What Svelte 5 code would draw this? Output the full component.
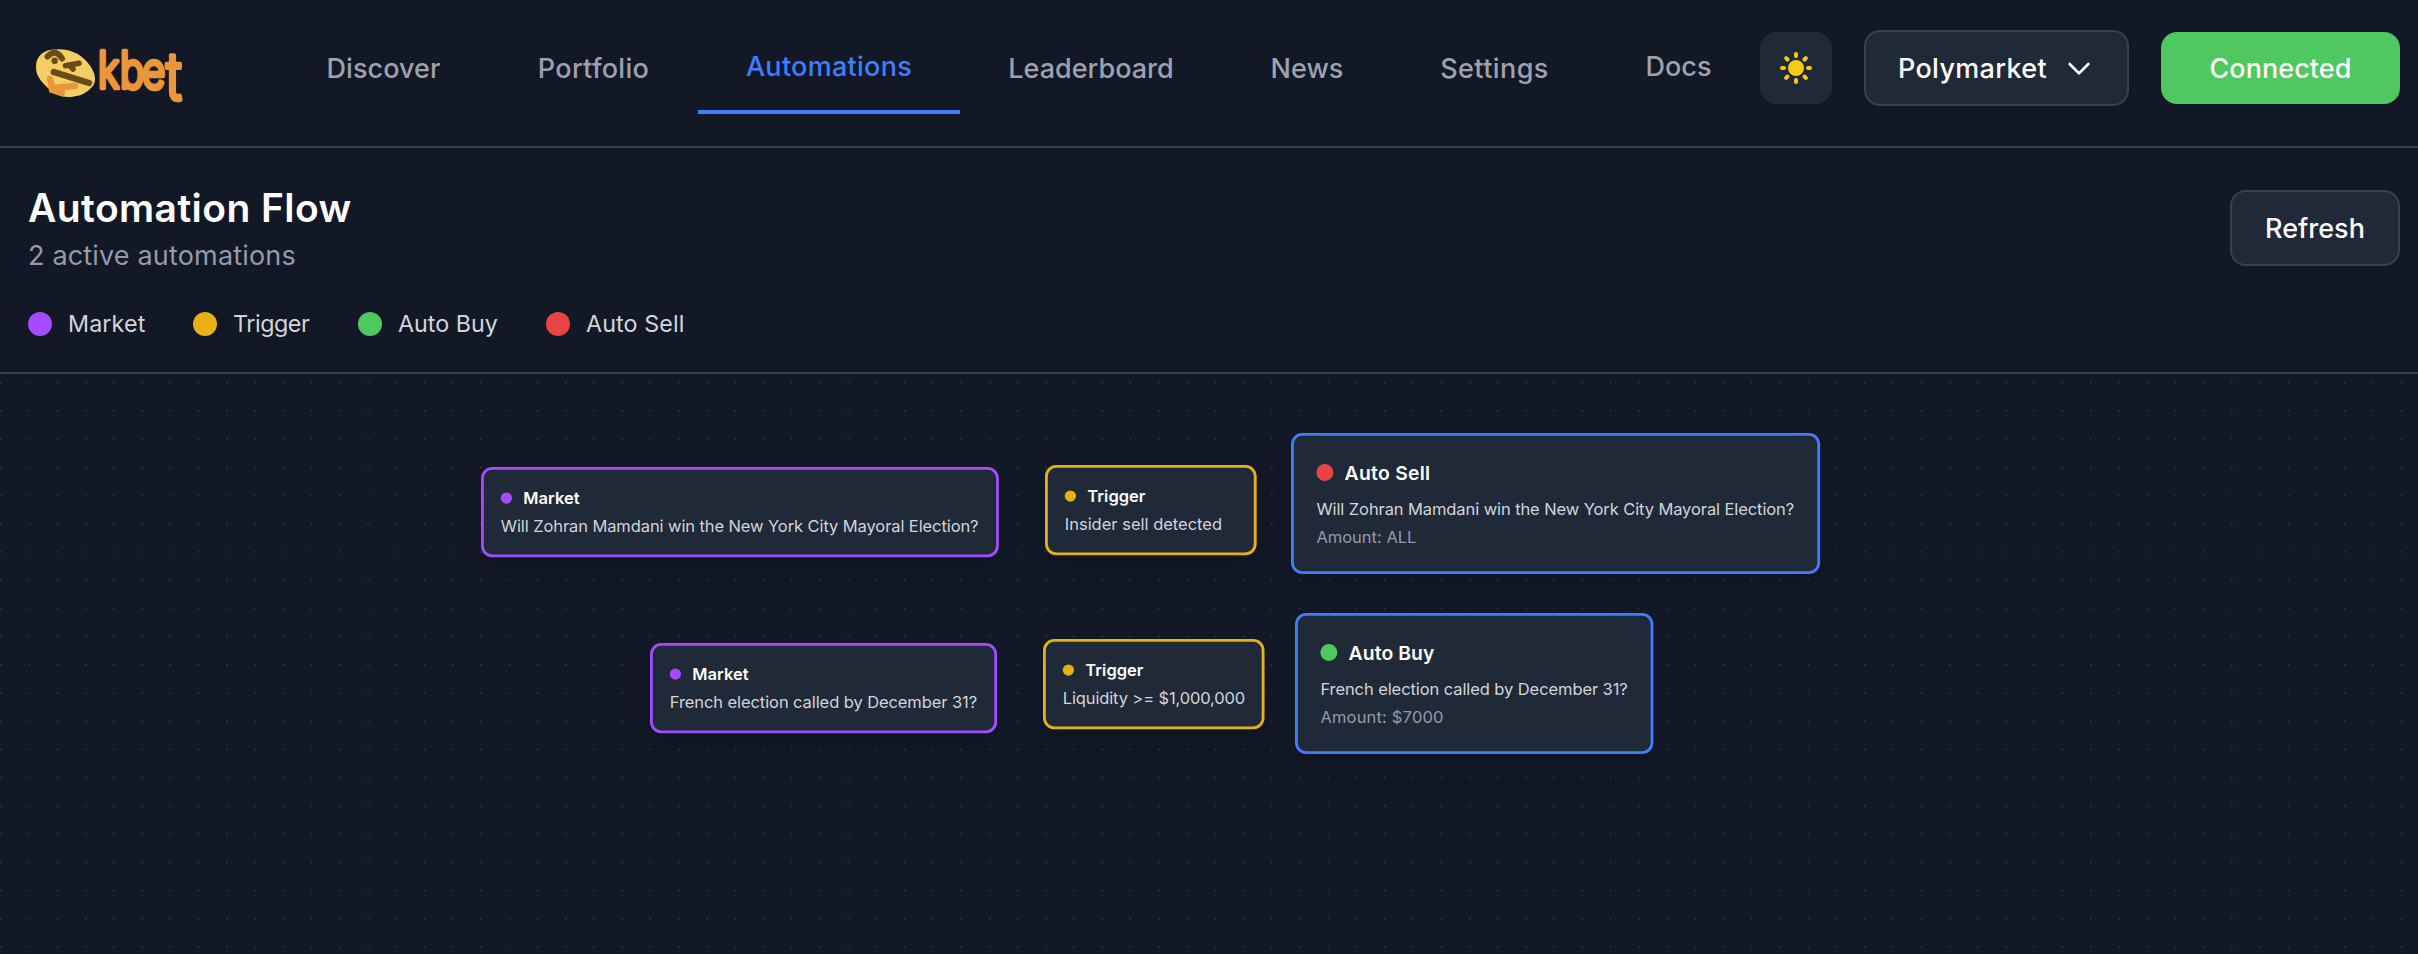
<script>
  const nav = [
    { label: 'Discover', width: 211, spacing: 0.05 },
    { label: 'Portfolio', width: 209, spacing: 0.3 },
    { label: 'Automations', width: 262, spacing: 0.28, active: true },
    { label: 'Leaderboard', width: 262, spacing: 0 },
    { label: 'News', width: 170, spacing: 0 },
    { label: 'Settings', width: 205, spacing: 0.4 },
    { label: 'Docs', width: 163, spacing: 0, raised: true },
  ];

  const legend = [
    { label: 'Market', color: '#a24bff', width: 77, spacing: 0.12 },
    { label: 'Trigger', color: '#e7b114', width: 77, spacing: -0.45 },
    { label: 'Auto Buy', color: '#50c860', width: 100, spacing: 0 },
    { label: 'Auto Sell', color: '#e84444', width: 100, spacing: 0.1 },
  ];

  const zoom = 1.411;
  const mayor = 'Will Zohran Mamdani win the New York City Mayoral Election?';
  const french = 'French election called by December 31?';

  // Node positions are canvas pixels, measured from the canvas' top left corner.
  const nodes = [
    { kind: 'market', title: 'Market', text: mayor, x: 481.4, y: 93.2, w: 517.6, spacing: -0.065 },
    { kind: 'trigger', title: 'Trigger', text: 'Insider sell detected', x: 1045, y: 90.6, w: 212, spacing: 0 },
    { kind: 'action', title: 'Auto Sell', dot: 'sell', text: mayor, amount: 'Amount: ALL', x: 1291, y: 59, w: 528.8, spacing: -0.065, titleSpacing: 0.2 },
    { kind: 'market', title: 'Market', text: french, x: 649.5, y: 268.5, w: 347.4, spacing: -0.058 },
    { kind: 'trigger', title: 'Trigger', text: 'Liquidity >= $1,000,000', x: 1043, y: 265.3, w: 221.8, spacing: -0.09 },
    { kind: 'action', title: 'Auto Buy', dot: 'buy', text: french, amount: 'Amount: $7000', x: 1294.7, y: 239.2, w: 358.6, spacing: -0.058, titleSpacing: 0.07, amountSpacing: 0.13 },
  ];
</script>

<div class="page">
  <header class="topbar">
    <svg class="logo" viewBox="0 0 160 76" width="160" height="76" aria-label="kbet">
      <path d="M2 33C2 27 4 23 8 19.500C12 16 18 15 23 15.500C29 15 34 16 39 18C45 20 50 24 54 29C58 34 61 39 61 45C61 51 58 53 55 56C49 61 42 63 34 63C26 63 21 60 16 56C12 52 7 48 4 42C2.500 39 2 36 2 33Z" fill="#f4cd65" />
      <path d="M16 45L18 54L41 52M18 56L28 59" fill="none" stroke="#eb9638" stroke-width="6.500" stroke-linecap="round" stroke-linejoin="round" />
      <path d="M13.500 22.500Q21.500 14 28 24.500" fill="none" stroke="#6a4a16" stroke-width="6" stroke-linecap="round" />
      <circle cx="20.7" cy="26.700" r="3.200" fill="#6a4a16" />
      <path d="M31.500 31.700L45 29.300M37.500 33.500L39 35" fill="none" stroke="#6a4a16" stroke-width="5.600" stroke-linecap="round" />
      <path d="M19.800 38L55 49" fill="none" stroke="#6a4a16" stroke-width="6.400" stroke-linecap="round" />
      <text class="wordmark" transform="scale(.8 1)" y="54.500"><tspan x="80">k</tspan><tspan x="107.500">b</tspan><tspan x="135">e</tspan><tspan class="tall" x="165" dy="12">t</tspan></text>
    </svg>

    <nav>
      {#each nav as item}
        <a class:active={item.active} class:raised={item.raised} style="width: {item.width}px; letter-spacing: {item.spacing}px">{item.label}</a>
      {/each}
    </nav>

    <div class="actions">
      <button class="theme" aria-label="Toggle theme">
        <svg width="40" height="40" viewBox="0 0 20 20" fill="#f8cb13">
          <path fill-rule="evenodd" clip-rule="evenodd" d="M10 2a1 1 0 011 1v1a1 1 0 11-2 0V3a1 1 0 011-1zm4 8a4 4 0 11-8 0 4 4 0 018 0zm-.464 4.950l.707.707a1 1 0 001.414-1.414l-.707-.707a1 1 0 00-1.414 1.414zm2.120-10.607a1 1 0 010 1.414l-.706.707a1 1 0 11-1.414-1.414l.707-.707a1 1 0 011.414 0zM17 11a1 1 0 100-2h-1a1 1 0 100 2h1zm-7 4a1 1 0 011 1v1a1 1 0 11-2 0v-1a1 1 0 011-1zM5.050 6.464A1 1 0 106.465 5.050l-.708-.707a1 1 0 00-1.414 1.414l.707.707zm1.414 8.486l-.707.707a1 1 0 01-1.414-1.414l.707-.707a1 1 0 011.414 1.414zM4 11a1 1 0 100-2H3a1 1 0 000 2h1z" />
        </svg>
      </button>
      <button class="btn select">
        <span>Polymarket</span>
        <svg width="32" height="32" viewBox="0 0 24 24" fill="none" stroke="#fff" stroke-width="2" stroke-linecap="round" stroke-linejoin="round"><path d="M19 9l-7 7-7-7" /></svg>
      </button>
      <button class="connected">Connected</button>
    </div>
  </header>

  <section class="intro">
    <div class="heading">
      <div>
        <h1>Automation Flow</h1>
        <p>2 active automations</p>
      </div>
      <button class="btn refresh">Refresh</button>
    </div>
    <ul class="legend">
      {#each legend as item}
        <li><i style="background: {item.color}"></i><span style="width: {item.width}px; letter-spacing: {item.spacing}px">{item.label}</span></li>
      {/each}
    </ul>
  </section>

  <main class="canvas">
    <svg class="grid" width="100%" height="100%">
      <defs>
        <pattern id="dots" x="0.2" y="7.900" width="28.24" height="28.22" patternUnits="userSpaceOnUse">
          <circle cx="0.8" cy="0.8" r="0.75" fill="#465060" />
        </pattern>
      </defs>
      <rect width="100%" height="100%" fill="url(#dots)" />
    </svg>
    {#each nodes as node}
      <article class="node {node.kind}" style="left: {node.x}px; top: {node.y}px; width: {node.w / zoom}px; transform: scale({zoom})">
        <h2 style="letter-spacing: {node.titleSpacing ?? 0.02}px"><i class={node.dot}></i>{node.title}</h2>
        <p style="letter-spacing: {node.spacing}px">{node.text}</p>
        {#if node.amount}<p class="amount" style="letter-spacing: {node.amountSpacing ?? 0}px">{node.amount}</p>{/if}
      </article>
    {/each}
  </main>
</div>

<style>
  :global(body) {
    background: #121826;
  }

  .page {
    display: flex;
    flex-direction: column;
    height: 954px;
    overflow: hidden;
    background: #121826;
    color: #fff;
    font-family: Inter, 'Liberation Sans', sans-serif;
  }

  .page *, .page {
    box-sizing: border-box;
  }

  h1, h2, p, ul {
    margin: 0;
    padding: 0;
  }

  button {
    font-family: inherit;
    color: #fff;
    border: 0;
    padding: 0;
  }

  .topbar {
    display: flex;
    flex: none;
    align-items: center;
    height: 148px;
    padding: 0 18px 10px 34px;
    border-bottom: 2px solid #374050;
  }

  .logo {
    flex: none;
    align-self: flex-start;
    margin-top: 34px;
    margin-right: 84px;
    overflow: visible;
  }

  .wordmark {
    font-family: Inter, sans-serif;
    font-size: 50px;
    font-weight: 300;
    fill: #eb9638;
    stroke: #eb9638;
    stroke-width: 4.6px;
    stroke-linejoin: round;
    stroke-linecap: round;
  }

  .tall {
    font-size: 66px;
  }

  nav {
    display: flex;
  }

  nav a {
    display: flex;
    justify-content: center;
    align-items: center;
    height: 92px;
    font-size: 27px;
    font-weight: 500;
    color: #9ca2ae;
    white-space: nowrap;
  }

  nav a.active {
    color: #417dff;
    border-bottom: 4px solid #417dff;
  }

  nav a.raised {
    padding-bottom: 4px;
  }

  .actions {
    display: flex;
    align-items: center;
    gap: 32px;
    margin-left: auto;
  }

  .theme {
    display: grid;
    place-items: center;
    width: 72px;
    height: 72px;
    border-radius: 16px;
    background: #202937;
  }

  .btn {
    display: flex;
    align-items: center;
    justify-content: center;
    height: 76px;
    border: 2px solid #374050;
    border-radius: 16px;
    background: #202937;
    font-size: 27px;
    font-weight: 500;
  }

  .select {
    width: 265px;
    gap: 16px;
    letter-spacing: 0.35px;
  }

  .refresh {
    width: 170px;
  }

  .connected {
    width: 239px;
    height: 72px;
    border-radius: 16px;
    background: #50c860;
    font-size: 27px;
    font-weight: 500;
    letter-spacing: 0.05px;
  }

  .intro {
    flex: none;
    height: 226px;
    padding: 32px 18px 0 28px;
    border-bottom: 2px solid #374050;
  }

  .heading {
    display: flex;
    align-items: center;
    justify-content: space-between;
    height: 96px;
  }

  h1 {
    font-size: 39px;
    line-height: 56px;
    font-weight: 600;
    letter-spacing: 0.42px;
  }

  .heading p {
    font-size: 27px;
    line-height: 40px;
    letter-spacing: 0.17px;
    color: #949ba8;
  }

  .legend {
    display: flex;
    gap: 48px;
    margin-top: 32px;
    list-style: none;
    font-size: 23.3px;
    line-height: 32px;
    color: #d1d5db;
  }

  .legend li {
    display: flex;
    align-items: center;
    gap: 16px;
    white-space: nowrap;
  }

  .legend i {
    width: 24px;
    height: 24px;
    border-radius: 50%;
  }

  .canvas {
    position: relative;
    flex: 1;
    overflow: hidden;
  }

  .grid {
    display: block;
  }

  .node {
    position: absolute;
    transform-origin: 0 0;
    padding: 12px;
    border: 2px solid;
    border-radius: 8px;
    background: #202937;
    box-shadow: 0 10px 15px -3px rgba(0, 0, 0, 0.1), 0 4px 6px -4px rgba(0, 0, 0, 0.1);
    white-space: nowrap;
  }

  .market { border-color: #a24bff; }
  .trigger { border-color: #e7b114; }
  .action { border-color: #417dff; padding: 16px; }

  .node h2 {
    display: flex;
    align-items: center;
    gap: 8px;
    margin-bottom: 4px;
    font-size: 11.7px;
    line-height: 16px;
    font-weight: 600;
    color: #fff;
  }

  .node h2 i {
    width: 8px;
    height: 8px;
    border-radius: 50%;
  }

  .market i { background: #a24bff; }
  .trigger i { background: #e7b114; }

  .action h2 {
    margin-bottom: 8px;
    font-size: 13.7px;
    line-height: 20px;
  }

  .action h2 i {
    width: 12px;
    height: 12px;
  }

  .action .sell { background: #e84444; }
  .action .buy { background: #50c860; }

  .node p {
    font-size: 11.7px;
    line-height: 16px;
    color: #d1d5db;
  }

  .node .amount {
    margin-top: 4px;
    color: #949ba8;
  }
</style>
